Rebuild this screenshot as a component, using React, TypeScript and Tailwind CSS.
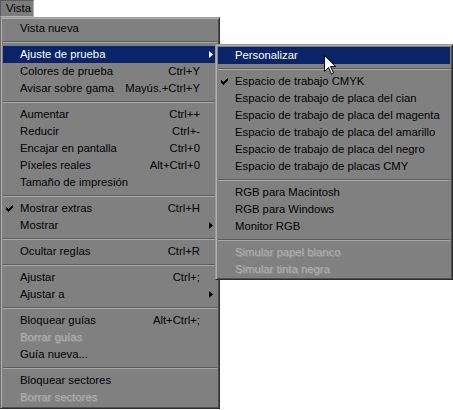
import React from 'react';

type Item =
  | { sep: true }
  | { label: string; shortcut?: string; sub?: boolean; checked?: boolean; disabled?: boolean; active?: boolean };

const mainItems: Item[] = [
  { label: 'Vista nueva' },
  { sep: true },
  { label: 'Ajuste de prueba', sub: true, active: true },
  { label: 'Colores de prueba', shortcut: 'Ctrl+Y' },
  { label: 'Avisar sobre gama', shortcut: 'Mayús.+Ctrl+Y' },
  { sep: true },
  { label: 'Aumentar', shortcut: 'Ctrl++' },
  { label: 'Reducir', shortcut: 'Ctrl+-' },
  { label: 'Encajar en pantalla', shortcut: 'Ctrl+0' },
  { label: 'Píxeles reales', shortcut: 'Alt+Ctrl+0' },
  { label: 'Tamaño de impresión' },
  { sep: true },
  { label: 'Mostrar extras', shortcut: 'Ctrl+H', checked: true },
  { label: 'Mostrar', sub: true },
  { sep: true },
  { label: 'Ocultar reglas', shortcut: 'Ctrl+R' },
  { sep: true },
  { label: 'Ajustar', shortcut: 'Ctrl+;' },
  { label: 'Ajustar a', sub: true },
  { sep: true },
  { label: 'Bloquear guías', shortcut: 'Alt+Ctrl+;' },
  { label: 'Borrar guías', disabled: true },
  { label: 'Guía nueva...' },
  { sep: true },
  { label: 'Bloquear sectores' },
  { label: 'Borrar sectores', disabled: true },
];

const subItems: Item[] = [
  { label: 'Personalizar', active: true },
  { sep: true },
  { label: 'Espacio de trabajo CMYK', checked: true },
  { label: 'Espacio de trabajo de placa del cian' },
  { label: 'Espacio de trabajo de placa del magenta' },
  { label: 'Espacio de trabajo de placa del amarillo' },
  { label: 'Espacio de trabajo de placa del negro' },
  { label: 'Espacio de trabajo de placas CMY' },
  { sep: true },
  { label: 'RGB para Macintosh' },
  { label: 'RGB para Windows' },
  { label: 'Monitor RGB' },
  { sep: true },
  { label: 'Simular papel blanco', disabled: true },
  { label: 'Simular tinta negra', disabled: true },
];

function Check() {
  return (
    <svg width="7" height="7" viewBox="0 0 7 7" className="absolute left-[3px] top-[5px]">
      <path d="M0 2h1v1h1v1h1V3h1V2h1V1h1V0h1v3h-1v1h-1v1h-1v1h-1v1H2V6H1V5H0z" fill="currentColor" />
    </svg>
  );
}

function Arrow() {
  return (
    <svg width="4" height="7" viewBox="0 0 4 7" className="absolute right-[4px] top-[5px]">
      <path d="M0 0L4 3.5L0 7z" fill="currentColor" />
    </svg>
  );
}

function MenuList({ items }: { items: Item[] }) {
  return (
    <div className="flex flex-col">
      {items.map((it, i) => {
        if ('sep' in it) {
          return (
            <div key={i} className="h-[9px] flex items-center">
              <div className="w-full h-[2px] border-t border-t-[#5c5c5c] border-b border-b-[#a8a8a8]" />
            </div>
          );
        }
        return (
          <div
            key={i}
            className={`relative h-[17px] flex items-center pl-[17px] pr-[17px] whitespace-nowrap ${
              it.active ? 'bg-[#0a246a] text-white' : it.disabled ? 'text-[#b0b0b0]' : 'text-black'
            }`}
            style={it.disabled ? { textShadow: '1px 1px 0 #949494' } : undefined}
          >
            {it.checked && <Check />}
            <span className="flex-1">{it.label}</span>
            {it.shortcut && <span className="pl-2">{it.shortcut}</span>}
            {it.sub && <Arrow />}
          </div>
        );
      })}
    </div>
  );
}

export default function App() {
  return (
    <div className="relative w-[453px] h-[410px] bg-white text-[11.3px] leading-none font-['Liberation_Sans',Arial,sans-serif]">
      {/* menu bar title */}
      <div className="w-[34px] h-[17px] bg-[#7c7c7c] border border-t-[#5a5a5a] border-l-[#5a5a5a] border-r-[#b4b4b4] border-b-[#b4b4b4] flex items-center pl-[5px]">
        Vista
      </div>

      {/* main menu */}
      <div className="w-[220px] bg-[#808080] border border-t-[#9a9a9a] border-l-[#6a6a6a] border-r-[#2e2e2e] border-b-[#2e2e2e] shadow-[inset_1px_1px_0_#b0b0b0,inset_-1px_-1px_0_#505050] px-[2px] pt-[2px] pb-[2px]">
        <MenuList items={mainItems} />
      </div>

      {/* submenu */}
      <div className="absolute left-[215px] top-[44px] w-[238px] bg-[#808080] border border-t-[#9a9a9a] border-l-[#9a9a9a] border-r-[#2e2e2e] border-b-[#2e2e2e] shadow-[inset_1px_1px_0_#b0b0b0,inset_-1px_-1px_0_#505050] px-[2px] pt-[2px] pb-[1px]">
        <MenuList items={subItems} />
      </div>

      {/* mouse pointer */}
      <svg width="12" height="20" viewBox="0 0 12 20" className="absolute left-[324px] top-[55px]">
        <path d="M0.5 0.5V16.5L4.5 12.5L7.5 19L9.5 18L6.5 11.5H11.5Z" fill="white" stroke="black" strokeWidth="1" strokeLinejoin="miter" />
      </svg>
    </div>
  );
}
